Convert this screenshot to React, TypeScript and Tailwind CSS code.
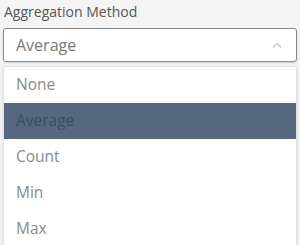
export default function App() {
  const options = ['None', 'Average', 'Count', 'Min', 'Max']
  const selected = 'Average'

  return (
    <div className="h-[245px] w-[300px] overflow-hidden bg-[#f4f4f4] px-[3px] pt-[2px] font-['Open_Sans',sans-serif]">
      <div className="pl-[1px] text-[14px] leading-[20px] text-[#555]">Aggregation Method</div>
      <div className="mt-[6px] flex h-[34px] items-center justify-between rounded-[3px] border border-[#8a8a8a] bg-white pl-[12px] pr-[12px] shadow-[0_1px_2px_rgba(0,0,0,0.15)]">
        <span className="text-[16px] text-[#7a7a7a]">{selected}</span>
        <svg width="10" height="6" viewBox="0 0 10 6" className="mr-[2px]">
          <path d="M1 5.5 L5 1.5 L9 5.5" fill="none" stroke="#c4c4c4" strokeWidth="1.2" />
        </svg>
      </div>
      <ul className="mt-[4px] rounded-[2px] border border-[#e2e2e2] bg-white shadow-[0_1px_3px_rgba(0,0,0,0.12)]">
        {options.map(o => (
          <li
            key={o}
            className={
              o === selected
                ? 'flex h-[36px] items-center bg-[#56687f] pl-[12px] text-[15.5px] text-[#3c4d63]'
                : 'flex h-[36px] items-center pl-[12px] text-[15.5px] text-[#8a8a8a]'
            }
          >
            {o}
          </li>
        ))}
      </ul>
    </div>
  )
}
